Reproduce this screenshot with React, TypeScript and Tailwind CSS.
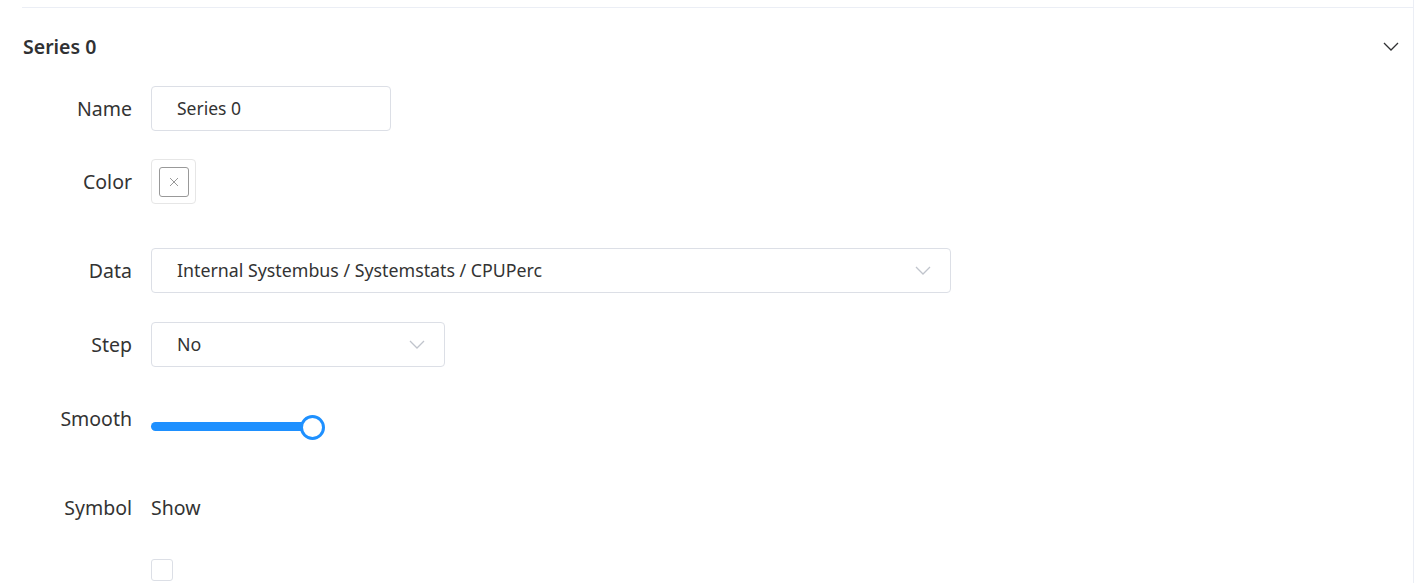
import React from "react";

function Chevron({ className }: { className?: string }) {
  return (
    <svg viewBox="0 0 16 9" fill="none" className={className}>
      <polyline points="1,1 8,8 15,1" stroke="currentColor" strokeWidth="1.3" />
    </svg>
  );
}

function Row({ label, children, className }: { label: string; children?: React.ReactNode; className?: string }) {
  return (
    <div className={"flex items-center " + (className ?? "")}>
      <div className="w-[129px] shrink-0 pr-[19px] text-right text-[19.5px] text-[#333]">{label}</div>
      <div className="flex-1">{children}</div>
    </div>
  );
}

export default function App() {
  return (
    <div className="h-[583px] w-[1414px] overflow-hidden bg-white font-['Noto_Sans',sans-serif] text-[#333]">
      <div className="h-full border-r border-[#ebeef5] pt-[7px]">
        <div className="ml-[22px] border-t border-[#ebeef5]">
          {/* header */}
          <div className="flex h-[77px] items-center justify-between pl-px pr-[14px]">
            <span className="text-[19.5px] font-semibold text-[#303133]">Series 0</span>
            <Chevron className="h-[9px] w-[16px] text-[#303133]" />
          </div>

          {/* Name */}
          <Row label="Name" className="mt-px h-[45px]">
            <div className="flex h-[45px] w-[240px] items-center rounded-[4px] border border-[#dcdfe6] pl-[25px] text-[17.5px] text-[#333]">
              Series 0
            </div>
          </Row>

          {/* Color */}
          <Row label="Color" className="mt-[28px] h-[45px]">
            <div className="flex h-[45px] w-[45px] items-center justify-center rounded-[4px] border border-[#e6e6e6]">
              <div className="flex h-[30px] w-[30px] items-center justify-center rounded-[3px] border border-[#999]">
                <svg viewBox="0 0 10 10" className="h-[10px] w-[10px] text-[#999]">
                  <path d="M1 1L9 9M9 1L1 9" stroke="currentColor" strokeWidth="1" />
                </svg>
              </div>
            </div>
          </Row>

          {/* Data */}
          <Row label="Data" className="mt-[44px] h-[45px]">
            <div className="flex h-[45px] w-[800px] items-center justify-between rounded-[4px] border border-[#dcdfe6] pl-[25px] pr-[19px] text-[17.8px]">
              <span>Internal Systembus / Systemstats / CPUPerc</span>
              <Chevron className="h-[9px] w-[16px] text-[#c0c4cc]" />
            </div>
          </Row>

          {/* Step */}
          <Row label="Step" className="mt-[29px] h-[45px]">
            <div className="flex h-[45px] w-[294px] items-center justify-between rounded-[4px] border border-[#dcdfe6] pl-[25px] pr-[19px] text-[17.8px]">
              <span>No</span>
              <Chevron className="h-[9px] w-[16px] text-[#c0c4cc]" />
            </div>
          </Row>

          {/* Smooth */}
          <Row label="Smooth" className="mt-[29px] h-[45px]">
            <div className="relative mt-[16px] h-[24px] w-[174px]">
              <div className="absolute left-0 top-[7px] h-[9px] w-[162px] rounded-full bg-[#1e90ff]" />
              <div className="absolute left-[149px] top-0 h-[25px] w-[25px] rounded-full border-[3px] border-[#1e90ff] bg-white" />
            </div>
          </Row>

          {/* Symbol */}
          <Row label="Symbol" className="mt-[44px] h-[45px]">
            <span className="text-[19.5px]">Show</span>
          </Row>

          <div className="mt-[29px] flex">
            <div className="w-[129px]" />
            <div className="h-[22px] w-[22px] rounded-[3px] border border-[#dcdfe6]" />
          </div>
        </div>
      </div>
    </div>
  );
}
